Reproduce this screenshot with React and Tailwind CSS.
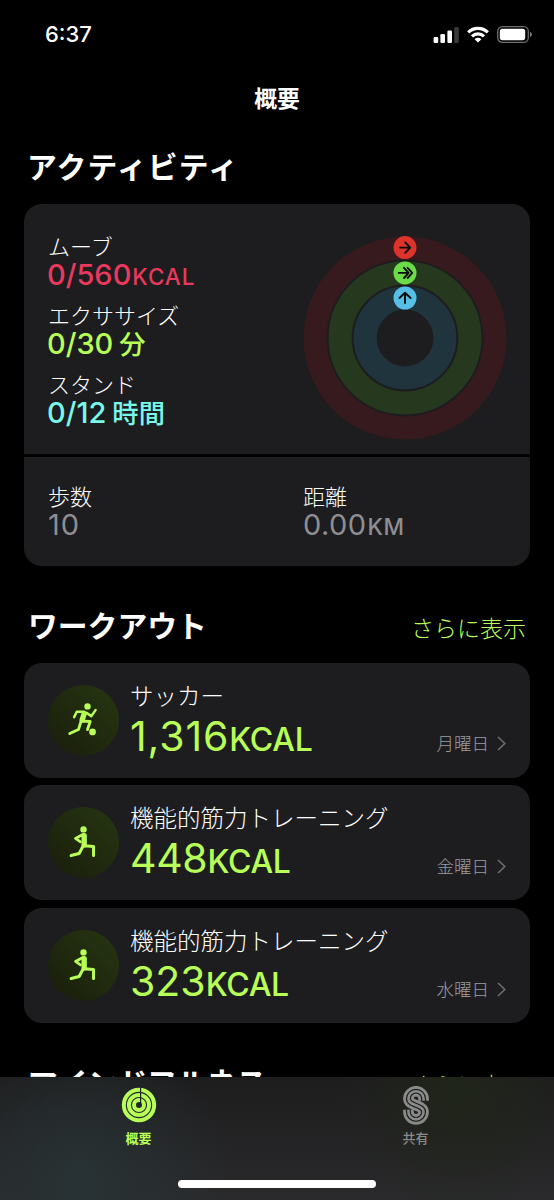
// src/App.jsx
import React from "react";

const workouts = [
  { id: 1, name: "サッカー", kcal: "1,316", day: "月曜日", icon: SoccerIcon, tracking: "tracking-[0.9px]" },
  { id: 2, name: "機能的筋力トレーニング", kcal: "448", day: "金曜日", icon: StrengthIcon, tracking: "tracking-[-0.3px]" },
  { id: 3, name: "機能的筋力トレーニング", kcal: "323", day: "水曜日", icon: StrengthIcon, tracking: "tracking-[0px]" },
];

const goals = [
  { label: "ムーブ", value: "0/560", unit: "KCAL", color: "text-[#e9395e]" },
  { label: "エクササイズ", value: "0/30", unit: "分", color: "text-[#b8ff57]" },
  { label: "スタンド", value: "0/12", unit: "時間", color: "text-[#78f8ea]" },
];

function StatusBar() {
  return (
    <div className="flex h-[68px] items-center justify-between pl-[45px] pr-[21px]">
      <span className="text-[22px] leading-none font-medium">6:37</span>
      <div className="flex items-center gap-[8px]">
        <svg width="26" height="17" viewBox="0 0 26 17">
          <rect x="0.6" y="11" width="4.6" height="6" rx="1.2" fill="#fff" />
          <rect x="7.4" y="8" width="4.6" height="9" rx="1.2" fill="#fff" />
          <rect x="14.4" y="4.5" width="4.6" height="12.5" rx="1.2" fill="#fff" />
          <rect x="21.2" y="1" width="4.6" height="16" rx="1.2" fill="#3a3a3a" />
        </svg>
        <svg width="22" height="17" viewBox="0 0 22 17" fill="none" stroke="#fff" strokeWidth="3.2">
          <path d="M1.2 6.3a14 14 0 0 1 19.6 0" />
          <path d="M5 10.4a8.6 8.6 0 0 1 12 0" />
          <path d="M11 16.6 7.6 13.2a4.9 4.9 0 0 1 6.8 0z" fill="#fff" stroke="none" />
        </svg>
        <svg width="36" height="17" viewBox="0 0 36 17">
          <rect x="0.7" y="0.7" width="30.6" height="15.6" rx="4.6" fill="none" stroke="#6d6d6d" strokeWidth="1.3" />
          <rect x="2.8" y="2.8" width="25.4" height="11.4" rx="2.6" fill="#fff" />
          <path d="M33 5.8c2.4.8 2.4 4.6 0 5.4z" fill="#7a7a7a" />
        </svg>
      </div>
    </div>
  );
}

function ActivityRings() {
  return (
    <svg width="204" height="204" viewBox="-102 -102 204 204" fill="none">
      <circle r="90" stroke="#371a1e" strokeWidth="23" />
      <circle r="64.9" stroke="#26391f" strokeWidth="23" />
      <circle r="39.9" stroke="#20343d" strokeWidth="23" />
      <circle cy="-90.4" r="11.5" fill="#dd332c" />
      <circle cy="-65.1" r="11.5" fill="#6bdc48" />
      <circle cy="-40" r="11.5" fill="#55bfe6" />
      <g stroke="#0c0c0c" strokeWidth="1.9" strokeLinecap="round" strokeLinejoin="round">
        <path d="M-4.8-90.4H5M.2-95.6 5.2-90.4.2-85.2" />
        <path d="M-6.3-65.1H3M-1-70.2 3.6-65.1-1-60M2.6-70.2 7.2-65.1 2.6-60" />
        <path d="M0-35V-45M-5.6-40 0-45.2 5.6-40" />
      </g>
    </svg>
  );
}

function SoccerIcon() {
  return (
    <svg
      width="71"
      height="71"
      viewBox="84 88 212 212"
      fill="none"
      stroke="#b8ff57"
      strokeLinecap="round"
      strokeLinejoin="round"
    >
      <circle cx="202" cy="152" r="9.5" fill="#b8ff57" stroke="none" />
      <circle cx="217" cy="228" r="10" fill="#b8ff57" stroke="none" />
      <path d="M192 174 186 192" strokeWidth="16" />
      <path d="M192 168H170L162 184M199 171 213 181 226 163" strokeWidth="7.5" />
      <path d="M186 196 210 197 202 221M182 198 175 221 149 233" strokeWidth="8.5" />
    </svg>
  );
}

function StrengthIcon() {
  return (
    <svg
      width="71"
      height="71"
      viewBox="84 457 212 212"
      fill="none"
      stroke="#b8ff57"
      strokeLinecap="round"
      strokeLinejoin="round"
    >
      <circle cx="190" cy="524" r="9.5" fill="#b8ff57" stroke="none" />
      <path d="M192 543V570" strokeWidth="16" />
      <path d="M188 539 166 551 181 561" strokeWidth="8" />
      <path d="M192 573 220 575V602M188 575 177 596 153 602" strokeWidth="9" />
    </svg>
  );
}

function WorkoutCard({ workout }) {
  const Icon = workout.icon;
  return (
    <div className="flex h-[115px] rounded-[18px] bg-[#1d1d1f] pl-6 pr-[24px]">
      <div className="mt-[22px] h-[71px] w-[71px] shrink-0 rounded-full bg-linear-to-tr from-[#191d0b] to-[#273712]">
        <Icon />
      </div>
      <div className="ml-[11px] flex-1 pt-[20px]">
        <div className="h-[28px] text-[23.5px] leading-[28px] font-light whitespace-nowrap">
          {workout.name}
        </div>
        <div className="flex h-[50px] items-baseline leading-[50px] text-[#b8ff57]">
          <span className={`text-[41px] ${workout.tracking}`}>{workout.kcal}</span>
          <span className="text-[32px] font-[450] tracking-[-0.3px]">KCAL</span>
        </div>
      </div>
      <div className="mb-[21px] flex h-[26px] items-center gap-[8px] self-end text-[#9c9ca1]">
        <span className="text-[17.5px] leading-none font-light">{workout.day}</span>
        <svg width="9" height="15" viewBox="0 0 9 15" fill="none" stroke="#6c6c70" strokeWidth="1.6">
          <path d="M1 1 7.8 7.5 1 14" />
        </svg>
      </div>
    </div>
  );
}

function SectionTitle({ title, wide = false, more = false }) {
  return (
    <div className="flex h-[40px] items-center justify-between px-[4px]">
      <h2 className={`text-[29.8px] leading-[40px] font-bold ${wide ? "-ml-[1px] tracking-[1.2px]" : ""}`}>
        {title}
      </h2>
      {more && (
        <span className="mt-[6px] text-[23px] leading-[32px] font-light text-[#b8ff57]">さらに表示</span>
      )}
    </div>
  );
}

function TabBar() {
  return (
    <nav className="h-[123px] bg-[radial-gradient(circle_at_80px_105px,#283234_0,transparent_150px),radial-gradient(circle_at_460px_15px,#20251a_0,transparent_120px),linear-gradient(#1d1d1e,#2a2a2c)]">
      <div className="grid h-[76px] grid-cols-2">
        <div className="flex flex-col items-center pt-[10px] text-[#b8ff57]">
          <svg width="36" height="36" viewBox="-18 -18 36 36" fill="none" stroke="currentColor" strokeWidth="4">
            <circle r="15.2" />
            <circle r="10.1" />
            <circle r="5" />
            <path d="M1.6-18V-2" stroke="#1f2020" strokeWidth="1.2" />
          </svg>
          <span className="mt-[6px] text-[13px] leading-[18px] font-bold">概要</span>
        </div>
        <div className="flex flex-col items-center pt-[9px] text-[#8a8a8b]">
          <svg width="26" height="39" viewBox="0 0 26 39" fill="none">
            <path
              d="M20.6 14.8V12.8A7.6 7.6 0 0 0 5.4 12.8C5.4 20 20.6 18.6 20.6 25.8A7.6 7.6 0 0 1 5.4 25.8V23.8"
              stroke="currentColor"
              strokeWidth="10.6"
            />
            <path
              d="M20.6 15.2V12.8A7.6 7.6 0 0 0 5.4 12.8C5.4 20 20.6 18.6 20.6 25.8A7.6 7.6 0 0 1 5.4 25.8V23.4"
              stroke="#1f2020"
              strokeWidth="5"
            />
            <path
              d="M20.6 14.8V12.8A7.6 7.6 0 0 0 5.4 12.8C5.4 20 20.6 18.6 20.6 25.8A7.6 7.6 0 0 1 5.4 25.8V23.8"
              stroke="currentColor"
              strokeWidth="2.6"
            />
          </svg>
          <span className="mt-[4px] text-[13px] leading-[18px] font-medium">共有</span>
        </div>
      </div>
      <div className="mx-auto mt-[27px] h-[8px] w-[198px] rounded-full bg-white" />
    </nav>
  );
}

export default function App() {
  return (
    <div className="h-[1200px] w-[554px] overflow-hidden bg-black font-['Inter','Noto_Sans_CJK_JP',sans-serif] text-white">
      <div className="h-[1077px] overflow-hidden">
        <StatusBar />
        <h1 className="h-[60px] pt-px text-center text-[22.8px] leading-[60px] font-bold">概要</h1>

        <main className="px-6 pt-[19px]">
          <SectionTitle title="アクティビティ" wide />

          <section className="mt-[17px] overflow-hidden rounded-[18px]">
            <div className="flex h-[250px] justify-between bg-[#1d1d1f] pl-6 pr-[23.3px]">
              <div className="pt-[30px]">
                {goals.map((g) => (
                  <div key={g.label} className="h-[69px]">
                    <div className="h-[26px] text-[22px] leading-[26px] font-light">{g.label}</div>
                    <div className={`-ml-px flex h-[30px] items-baseline leading-[30px] font-[450] ${g.color}`}>
                      <span className="text-[29px]">{g.value}</span>
                      {g.unit === "KCAL" ? (
                        <span className="ml-px text-[22.5px] tracking-[0.9px]">{g.unit}</span>
                      ) : (
                        <span className="ml-[6px] text-[26.3px] font-medium">{g.unit}</span>
                      )}
                    </div>
                  </div>
                ))}
              </div>
              <div className="pt-[31.7px]">
                <ActivityRings />
              </div>
            </div>
            <div className="mt-[3px] grid h-[109px] grid-cols-2 bg-[#1d1d1f] pl-6 pt-[27px]">
              <div>
                <div className="h-[26px] text-[22px] leading-[26px] font-light">歩数</div>
                <div className="h-[30px] text-[29px] leading-[30px] tracking-[1px] text-[#8e8e93]">10</div>
              </div>
              <div className="pl-[14px]">
                <div className="h-[26px] text-[22px] leading-[26px] font-light">距離</div>
                <div className="flex h-[30px] items-baseline leading-[30px] text-[#8e8e93]">
                  <span className="text-[29px] tracking-[0.4px]">0.00</span>
                  <span className="ml-px text-[22.5px] font-[450] tracking-[0.6px]">KM</span>
                </div>
              </div>
            </div>
          </section>

          <div className="mt-[39.5px]">
            <SectionTitle title="ワークアウト" more />
          </div>
          <div className="mt-[17.2px] flex flex-col gap-[7.8px]">
            {workouts.map((w) => (
              <WorkoutCard key={w.id} workout={w} />
            ))}
          </div>

          <div className="mt-[40px]">
            <SectionTitle title="マインドフルネス" more />
          </div>
        </main>
      </div>
      <TabBar />
    </div>
  );
}
